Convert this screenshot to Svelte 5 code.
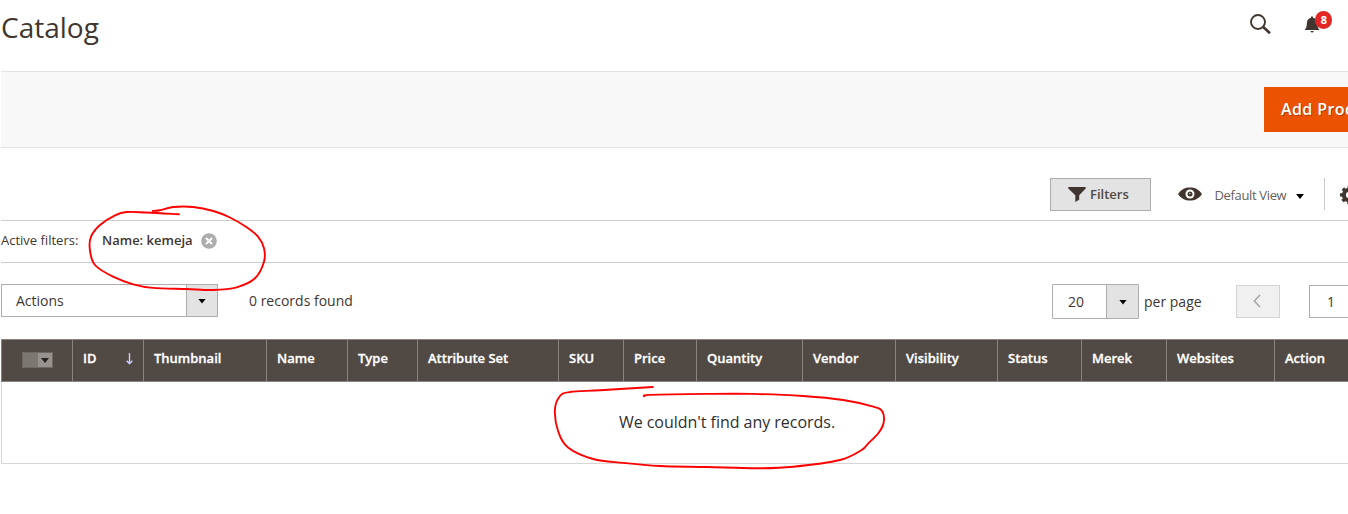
<script>
  const columns = [
    { label: 'ID', width: 71, sorted: true },
    { label: 'Thumbnail', width: 123 },
    { label: 'Name', width: 81 },
    { label: 'Type', width: 70 },
    { label: 'Attribute Set', width: 141 },
    { label: 'SKU', width: 65 },
    { label: 'Price', width: 73 },
    { label: 'Quantity', width: 106 },
    { label: 'Vendor', width: 93 },
    { label: 'Visibility', width: 102 },
    { label: 'Status', width: 84 },
    { label: 'Merek', width: 85 },
    { label: 'Websites', width: 108 },
    { label: 'Action', width: 90 }
  ];

  const filterMark = [
    [178.9, 214.3], [146.7, 212.5], [126.7, 212], [115, 215.3], [100, 225], [91, 236.7], [89.9, 250],
    [95, 265], [113, 276.7], [133.3, 284.3], [153, 287.9], [186.7, 289], [213, 290], [236.7, 287.3],
    [255, 278.3], [264, 261.7], [264, 248.3], [258, 236.7], [246.7, 227.3], [230, 217.5],
    [213.3, 211], [193.3, 207], [173.3, 207], [160, 210.3], [152.8, 210.9]
  ];
  const emptyMark = [
    [652.8, 387], [600, 390.2], [570, 392], [560, 396], [554.9, 410], [558.3, 431.7], [568.3, 447.7],
    [593.3, 459], [623, 462.9], [660, 466], [706.7, 467], [756.7, 468.3], [793.3, 466.7], [840, 460],
    [861.7, 450], [868.3, 443.3], [878.3, 433.3], [883.5, 423.3], [882.5, 411.7], [873.3, 406.7],
    [843.3, 400], [803, 396], [753, 393.9], [706.7, 393.9], [650, 394.9], [644.5, 396.3]
  ];

  // Smooth curve through every point of a pen stroke.
  function stroke(p) {
    let d = `M${p[0][0]} ${p[0][1]}`;
    for (let i = 0; i < p.length - 1; i++) {
      const a = p[i - 1] ?? p[i];
      const b = p[i];
      const c = p[i + 1];
      const e = p[i + 2] ?? c;
      d += `C${b[0] + (c[0] - a[0]) / 6} ${b[1] + (c[1] - a[1]) / 6} ${c[0] - (e[0] - b[0]) / 6} ${c[1] - (e[1] - b[1]) / 6} ${c[0]} ${c[1]}`;
    }
    return d;
  }
</script>

<div class="page">
  <header class="top">
    <h1>Catalog</h1>
    <svg class="search" width="22" height="22" viewBox="0 0 22 22">
      <circle cx="8" cy="8" r="7" fill="none" stroke="#41362f" stroke-width="1.900" />
      <path d="M13 12.800L20 19.200" stroke="#41362f" stroke-width="2.600" />
    </svg>
    <div class="bell">
      <svg width="16" height="18" viewBox="0 0 16 18">
        <path d="M7 .5h2v1.200c2.800.6 4 2.600 4.200 5.200.2 3.400.5 4.900 2.300 7.100H.7c1.700-2.200 2-3.700 2.200-7.100C3.100 4.300 4.200 2.300 7 1.700zM6.400 15h3.400q-.4 1.600-1.700 1.600T6.400 15z" fill="#41362f" />
      </svg>
      <span class="badge">8</span>
    </div>
  </header>

  <div class="actions-bar"><button class="primary">Add Product</button></div>

  <div class="toolbar">
    <button class="filters">
      <svg width="18" height="15" viewBox="0 0 18 15"><path d="M.3 0h17.400v1.500L11.200 8.300v4.400L7.300 15V8.300L.3 1.500z" fill="#41362f" /></svg>
      <span>Filters</span>
    </button>
    <div class="view">
      <svg width="24" height="14" viewBox="0 0 24 14">
        <path d="M0 7C3 2.300 7.200.4 12 .4S21 2.300 24 7c-3 4.700-7.200 6.500-12 6.500S3 11.700 0 7z" fill="#41362f" />
        <circle cx="12" cy="7" r="4.500" fill="#fff" />
        <circle cx="12" cy="7" r="2.500" fill="#41362f" />
        <circle cx="11.800" cy="6.600" r=".7" fill="#fff" />
      </svg>
      <span>Default View</span>
      <i class="caret"></i>
    </div>
    <div class="gear">
      <svg width="18" height="18" viewBox="0 0 18 18">
        <circle cx="9" cy="9" r="5.200" fill="none" stroke="#41362f" stroke-width="4" />
        <circle cx="9" cy="9" r="7.700" fill="none" stroke="#41362f" stroke-width="2.600" stroke-dasharray="3.300 2.747" stroke-dashoffset="1.650" />
      </svg>
    </div>
  </div>

  <div class="active">
    <span class="label">Active filters:</span>
    <b>Name: kemeja</b>
    <svg width="16" height="16" viewBox="0 0 16 16">
      <circle cx="8" cy="8" r="7.800" fill="#adadad" />
      <path d="M5 5l6 6M11 5l-6 6" stroke="#fff" stroke-width="2" />
    </svg>
  </div>

  <div class="controls">
    <div class="select mass"><span>Actions</span><div class="drop"><i class="caret"></i></div></div>
    <span class="found">0 records found</span>
    <div class="select size"><span>20</span><div class="drop"><i class="caret"></i></div></div>
    <span class="per">per page</span>
    <div class="prev">
      <svg width="8" height="14" viewBox="0 0 8 14"><path d="M7 1L1.300 7 7 13" fill="none" stroke="#a6a4a2" stroke-width="1.500" /></svg>
    </div>
    <div class="current">1</div>
  </div>

  <div class="grid">
    <div class="head">
      <div class="check"><div class="box"><span></span><div><i class="caret"></i></div></div></div>
      {#each columns as col}
        <div class="cell" style:width="{col.width}px">
          <span>{col.label}</span>
          {#if col.sorted}
            <svg width="7" height="12" viewBox="0 0 7 12"><path d="M3.500 0v10.500M.7 7.700l2.800 3 2.800-3" fill="none" stroke="#cfcbff" stroke-width="1.400" /></svg>
          {/if}
        </div>
      {/each}
    </div>
    <div class="empty">We couldn't find any records.</div>
  </div>

  <svg class="ink" width="1348" height="514" viewBox="0 0 1348 514">
    <path d={stroke(filterMark)} />
    <path d={stroke(emptyMark)} />
  </svg>
</div>

<style>
  :global(body) { margin: 0; background: #fff; }
  .page {
    position: relative;
    box-sizing: border-box;
    width: 1348px;
    height: 514px;
    padding-left: 1px;
    overflow: hidden;
    font-family: 'Open Sans', sans-serif;
    font-size: 14px;
    color: #41362f;
    white-space: nowrap;
  }
  .page * { box-sizing: border-box; }
  svg { display: block; flex: none; }
  button { font: inherit; margin: 0; border-radius: 0; }
  .caret {
    display: block;
    width: 8px;
    height: 5px;
    background: #000;
    clip-path: polygon(0 0, 100% 0, 50% 100%);
  }

  .top { display: flex; height: 71px; }
  h1 { margin: 8px 0 0; font-size: 28px; font-weight: 400; line-height: 38px; width: 1249px; }
  .search { margin-top: 14px; }
  .bell { position: relative; margin: 16px 0 0 32px; }
  .badge {
    position: absolute;
    left: 11px;
    top: -5px;
    width: 17px;
    height: 18px;
    border-radius: 9px;
    background: #e22626;
    color: #fff;
    font-size: 11px;
    font-weight: 700;
    line-height: 18px;
    text-align: center;
    padding-left: 1px;
  }

  .actions-bar {
    height: 77px;
    padding: 15px 0 0 1263px;
    background: #f8f8f8;
    border: solid #e3e3e3;
    border-width: 1px 0;
  }
  .primary {
    height: 45px;
    padding: 0 17px 2px;
    border: 0;
    background: #eb5202;
    color: #fff;
    font-size: 16px;
    font-weight: 600;
    letter-spacing: .4px;
    text-shadow: 1px 1px 0 rgba(0, 0, 0, .25);
  }

  .toolbar { display: flex; height: 72px; padding: 30px 0 0 1049px; }
  .filters {
    display: flex;
    flex: none;
    width: 101px;
    height: 33px;
    padding: 8px 0 0 17px;
    background: #e3e3e3;
    border: 1px solid #adadad;
    color: #514943;
    font-size: 13px;
    font-weight: 600;
    line-height: 15px;
    gap: 4px;
  }
  .view { display: flex; width: 173px; flex: none; padding-left: 27px; color: #666059; font-size: 13px; }
  .view svg { margin-top: 9px; }
  .view span { margin: 8px 0 0 12.5px; width: 81.5px; line-height: 18px; letter-spacing: -.35px; }
  .view .caret { margin-top: 16px; }
  .gear { height: 32px; border-left: 1px solid #ccc; padding: 8px 0 0 15px; }

  .active {
    display: flex;
    height: 43px;
    border: solid #ccc;
    border-width: 1px 0;
    font-size: 13px;
    line-height: 18px;
    padding-top: 10px;
  }
  .active .label { width: 101px; }
  .active b { width: 99px; font-weight: 600; }
  .active svg { margin-top: 2px; }

  .controls { display: flex; height: 76px; padding-top: 21px; }
  .select { display: flex; border: 1px solid #adadad; background: #fff; flex: none; }
  .select span { flex: 1; }
  .drop {
    display: flex;
    align-items: center;
    justify-content: center;
    width: 31px;
    padding-top: 1px;
    background: #e3e3e3;
    border-left: 1px solid #adadad;
  }
  .mass { width: 217px; height: 33px; line-height: 31px; }
  .mass span { padding-left: 14px; }
  .found { width: 803px; padding-left: 31px; line-height: 33px; }
  .found, .per, .prev, .current { flex: none; }
  .size { width: 87px; height: 35px; margin-left: 31px; border-radius: 1px; line-height: 34px; }
  .size span { padding-left: 15px; }
  .size .drop { width: 32px; padding-left: 1px; }
  .per { width: 97px; padding-left: 5px; line-height: 35px; }
  .prev {
    display: flex;
    width: 44px;
    height: 33px;
    margin-top: 1px;
    padding: 8px 0 0 16px;
    background: #f0f0f0;
    border: 1px solid #d3d3d3;
  }
  .current {
    width: 60px;
    height: 33px;
    margin: 1px 0 0 29px;
    padding-left: 17px;
    border: 1px solid #adadad;
    line-height: 32px;
  }

  .grid { height: 125px; width: 1360px; border: solid #d6d6d6; border-width: 0 0 1px 1px; }
  .head {
    display: flex;
    height: 43px;
    margin-left: -1px;
    background: #514943;
    border: 1px solid #8a837f;
    color: #fff;
    font-size: 13px;
    font-weight: 600;
  }
  .check { width: 70px; flex: none; padding: 12px 0 0 20px; }
  .box { display: flex; width: 31px; height: 16px; border: 1px solid #6f6965; background: #7d7772; }
  .box span { width: 15px; }
  .box div { flex: 1; padding: 5px 0 0 3px; background: #97928e; }
  .box .caret { background: #25211e; }
  .cell {
    display: flex;
    flex: none;
    justify-content: space-between;
    padding: 9px 10px 0;
    border-left: 1px solid #8a837f;
    line-height: 18px;
    -webkit-text-stroke: .3px #fff;
  }
  .cell svg { margin-top: 4px; }
  .empty { width: 1450px; padding-top: 29px; text-align: center; font-size: 16px; line-height: 22px; color: #303030; letter-spacing: -.03px; }

  .ink { position: absolute; inset: 0; pointer-events: none; }
  .ink path { fill: none; stroke: #f00; stroke-width: 1.900; stroke-linecap: round; }
</style>
